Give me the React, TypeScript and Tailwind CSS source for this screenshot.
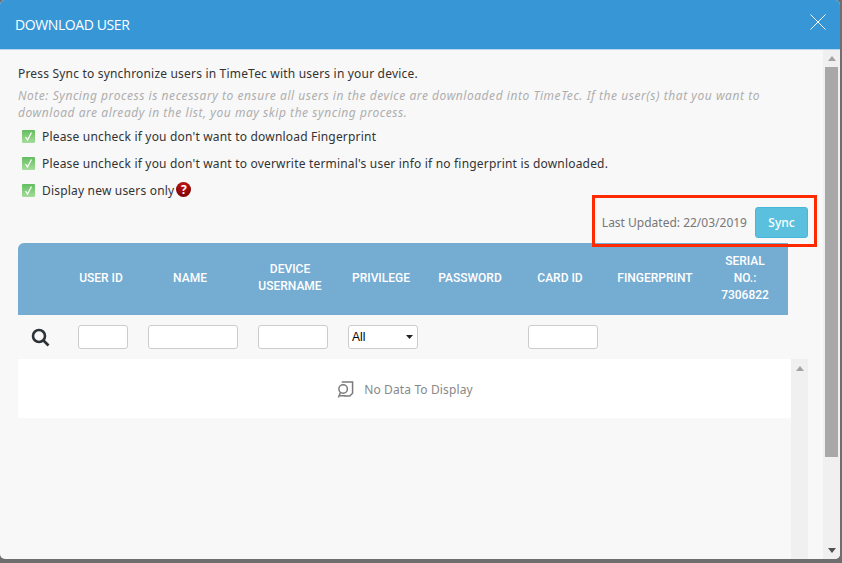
const headers = [
  { label: "", width: "w-[50px]" },
  { label: "USER ID", width: "w-[66px]" },
  { label: "NAME", width: "w-[112px]" },
  { label: "DEVICE USERNAME", width: "w-[88px]" },
  { label: "PRIVILEGE", width: "w-[94px]" },
  { label: "PASSWORD", width: "w-[84px]" },
  { label: "CARD ID", width: "w-[96px]" },
  { label: "FINGERPRINT", width: "w-[94px]" },
  { label: "SERIAL NO.: 7306822", width: "w-[62px] mx-[12px]" }
];

const options = [
  "Please uncheck if you don't want to download Fingerprint",
  "Please uncheck if you don't want to overwrite terminal's user info if no fingerprint is downloaded."
];

const inputClass = "h-6 rounded-[3px] border border-[#ccc] bg-white";

function GreenCheck() {
  return (
    <span className="flex h-[13px] w-[13px] shrink-0 items-center justify-center rounded-[1px] bg-gradient-to-b from-[#62bd5e] to-[#a5dd9b]">
      <svg viewBox="0 0 13 13" className="h-[13px] w-[13px]" fill="none" stroke="white" strokeWidth="1.2">
        <path d="M3.5 7 L5.5 10 L9.5 2.5" />
      </svg>
    </span>
  );
}

function ScrollArrow({ up, color }: { up: boolean; color: string }) {
  return (
    <svg viewBox="0 0 8 5" className="h-[5px] w-[8px]" fill={color}>
      <path d={up ? "M4 0 L8 5 L0 5 Z" : "M0 0 L8 0 L4 5 Z"} />
    </svg>
  );
}

export default function App() {
  return (
    <div className="relative h-[563px] w-[842px] overflow-hidden bg-[#6e6e6e] font-['Noto_Sans',sans-serif]">
      <div className="flex h-[559px] w-[840px] flex-col overflow-hidden rounded-[5px] bg-[#f8f8f8]">
        <header className="flex h-[50px] shrink-0 items-center justify-between border-b border-[#b9d5ea] bg-[#3797d6] pl-[15px] pr-[14px]">
          <h1 className="font-['Open_Sans',sans-serif] text-[14px] tracking-[-0.4px] text-white">DOWNLOAD USER</h1>
          <svg viewBox="0 0 16 16" className="mb-[6px] h-4 w-4" fill="none" stroke="white" strokeWidth="1">
            <path d="M0.5 0.5 L15.5 15.5 M15.5 0.5 L0.5 15.5" />
          </svg>
        </header>

        <div className="flex min-h-0 flex-1">
          <main className="flex w-[823px] shrink-0 flex-col pl-[18px] pr-[15px] pt-[15px] text-[12px] leading-[17px] tracking-[0.19px] text-[#333]">
            <p>Press Sync to synchronize users in TimeTec with users in your device.</p>
            <p className="mt-[5px] max-w-[760px] italic tracking-[0.54px] text-[#aeaeae]">
              Note: Syncing process is necessary to ensure all users in the device are downloaded into TimeTec. If the user(s) that you want to download are already in the list, you may skip the syncing process.
            </p>
            <div className="mt-[7px] flex flex-col gap-[10px] pl-[4px]">
              {options.map((text) => (
                <label key={text} className="flex items-center gap-[7px]">
                  <GreenCheck />
                  {text}
                </label>
              ))}
              <label className="flex items-center gap-[7px]">
                <GreenCheck />
                Display new users only
                <span className="-ml-[5px] -mt-[2px] flex h-[15px] w-[15px] items-center justify-center rounded-full bg-[radial-gradient(circle_at_50%_25%,#c41414,#6e0000)] text-[12px] font-bold text-white">?</span>
              </label>
            </div>

            <div className="mt-[8px] flex items-center justify-end gap-[8px]">
              <span className="tracking-normal text-[#777]">Last Updated: 22/03/2019</span>
              <button className="h-[31px] w-[53px] rounded-[3px] border border-[#46b8da] bg-[#5bc0de] font-medium tracking-normal text-white">Sync</button>
            </div>

            <div className="mt-[5px] flex h-[72px] w-[770px] shrink-0 items-center rounded-tl-[6px] bg-[#75acd2] pb-[2px] text-center font-['Roboto',sans-serif] text-[12px] font-medium tracking-normal text-white">
              {headers.map((h) => (
                <div key={h.label} className={h.width}>{h.label}</div>
              ))}
            </div>

            <div className="flex h-[44px] shrink-0 items-center">
              <svg viewBox="0 0 20 20" className="ml-[12px] h-[20px] w-[20px]" fill="none" stroke="#2c3338" strokeWidth="2.6">
                <circle cx="9" cy="9" r="6" />
                <path d="M13.5 13.5 L18.5 18.5" />
              </svg>
              <input className={`${inputClass} ml-[28px] w-[50px]`} />
              <input className={`${inputClass} ml-[20px] w-[90px]`} />
              <input className={`${inputClass} ml-[20px] w-[70px]`} />
              <div className="relative ml-[20px] w-[70px]">
                <select className={`${inputClass} w-full appearance-none pl-[3px] font-['Liberation_Sans',sans-serif] text-[12px] tracking-normal text-black`}>
                  <option>All</option>
                </select>
                <svg viewBox="0 0 7 4" className="pointer-events-none absolute right-[5px] top-[10px] h-[4px] w-[7px]" fill="#222">
                  <path d="M0 0 H7 L3.5 4 Z" />
                </svg>
              </div>
              <input className={`${inputClass} ml-[110px] w-[70px]`} />
            </div>

            <div className="flex min-h-0 flex-1">
              <div className="flex h-[59px] w-[773px] shrink-0 items-center justify-center gap-[10px] bg-white pl-[1px] pt-px tracking-[0.12px] text-[#888]">
                <svg viewBox="0 0 18 20" className="h-[19px] w-[17px]" fill="none" stroke="#7b7b7b" strokeWidth="1.6">
                  <path d="M5 2 H16.5 V14 L13.5 17 H8" />
                  <circle cx="6.5" cy="9.5" r="4.5" />
                  <path d="M3.5 13.5 L1.5 18.5 M3 16.5 H9" />
                </svg>
                No Data To Display
              </div>
              <div className="flex w-[17px] shrink-0 justify-center bg-[#f0f0f0] pt-[7px]">
                <ScrollArrow up color="#a3a3a3" />
              </div>
            </div>
          </main>

          <div className="flex w-[17px] shrink-0 flex-col items-center bg-[#f0f0f0]">
            <div className="flex h-[17px] shrink-0 items-center justify-center">
              <ScrollArrow up color="#a3a3a3" />
            </div>
            <div className="h-[390px] w-[13px] shrink-0 bg-[#a8a8a8]" />
            <div className="mt-auto flex h-[17px] shrink-0 items-center justify-center">
              <ScrollArrow up={false} color="#505050" />
            </div>
          </div>
        </div>
      </div>

      <div className="absolute left-[592px] top-[195px] h-[52px] w-[225px] border-[3px] border-[#ff2a00]" />
    </div>
  );
}
